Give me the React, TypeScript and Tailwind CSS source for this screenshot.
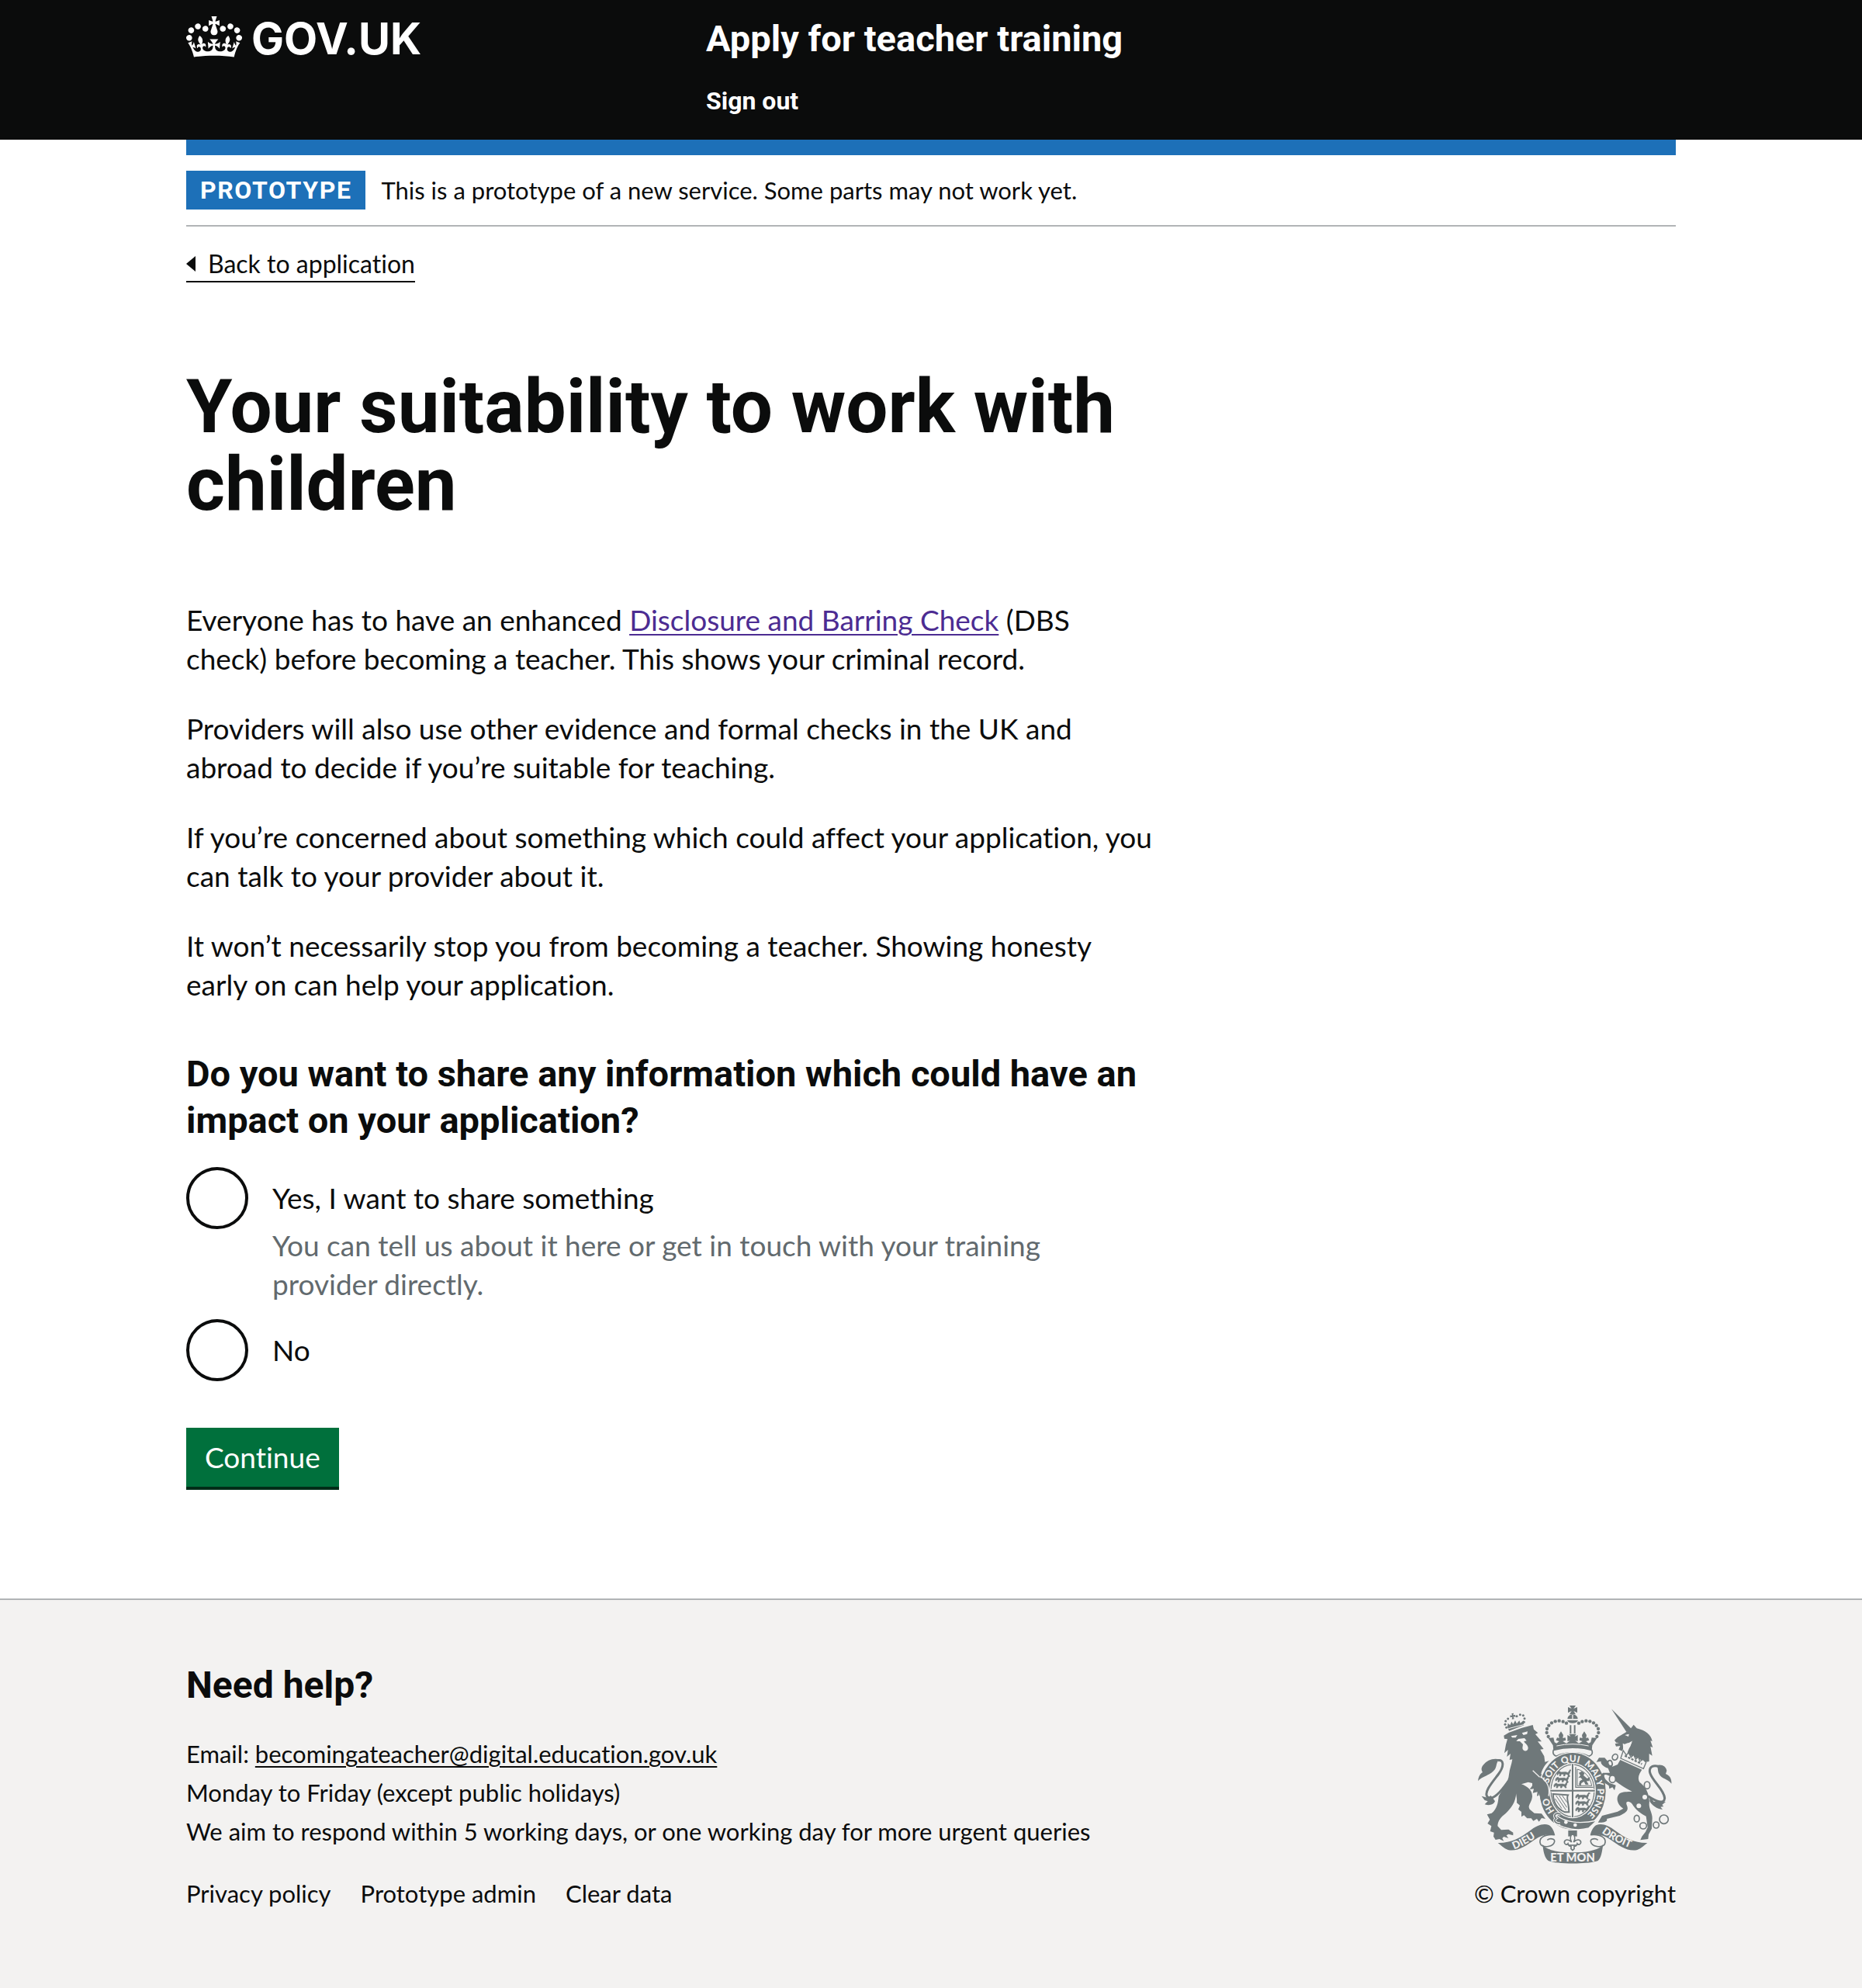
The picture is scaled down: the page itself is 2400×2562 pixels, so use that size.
import type { ReactNode } from "react";

const BODY = "font-['Lato','Liberation_Sans',sans-serif] [font-variant-ligatures:none]";
const HEAD = "font-['Roboto','Liberation_Sans',sans-serif] font-bold";

function CrownIcon() {
  return (
    <svg viewBox="0 0 132 97" className="mt-px h-[53px] w-[72px] shrink-0" fill="currentColor" aria-hidden="true">
      <path
        fillRule="evenodd"
        d="M25 30.2c3.5 1.5 7.7-.2 9.1-3.7 1.5-3.6-.2-7.8-3.9-9.2-3.6-1.4-7.6.3-9.1 3.9-1.4 3.5.3 7.5 3.9 9zM9 39.5c3.6 1.5 7.8-.2 9.2-3.7 1.5-3.6-.2-7.8-3.9-9.1-3.6-1.5-7.6.2-9.1 3.8-1.4 3.5.3 7.5 3.8 9zM4.4 57.2c3.5 1.5 7.7-.2 9.1-3.8 1.5-3.6-.2-7.7-3.9-9.1-3.5-1.5-7.6.3-9.1 3.8-1.4 3.5.3 7.6 3.9 9.1zm38.3-21.4c3.5 1.5 7.7-.2 9.1-3.8 1.5-3.6-.2-7.7-3.9-9.1-3.6-1.5-7.6.3-9.1 3.8-1.3 3.6.4 7.7 3.9 9.1zm64.4-5.6c-3.6 1.5-7.8-.2-9.1-3.7-1.5-3.6.2-7.8 3.8-9.2 3.6-1.4 7.7.3 9.2 3.9 1.3 3.5-.4 7.5-3.9 9zm15.9 9.3c-3.6 1.5-7.7-.2-9.1-3.7-1.5-3.6.2-7.8 3.7-9.1 3.6-1.5 7.7.2 9.2 3.8 1.5 3.5-.3 7.5-3.8 9zm4.7 17.7c-3.6 1.5-7.8-.2-9.2-3.8-1.5-3.6.2-7.7 3.9-9.1 3.6-1.5 7.7.3 9.2 3.8 1.3 3.5-.4 7.6-3.9 9.1zM89.3 35.8c-3.6 1.5-7.8-.2-9.2-3.8-1.4-3.6.2-7.7 3.9-9.1 3.6-1.5 7.7.3 9.2 3.8 1.4 3.6-.3 7.7-3.9 9.1zM69.7 17.7l8.9 4.7V9.3l-8.9 2.8c-.2-.3-.5-.6-.9-.9L72.4 0H59.6l3.5 11.2c-.3.3-.6.5-.9.9l-8.8-2.8v13.1l8.8-4.7c.3.3.6.7.9.9l-5 15.4v.1c-.2.8-.4 1.6-.4 2.4 0 4.1 3.1 7.5 7 8.1h.2c.3 0 .7.1 1 .1.4 0 .7 0 1-.1h.2c4-.6 7.1-4.1 7.1-8.1 0-.8-.1-1.7-.4-2.4V34l-5.1-15.4c.4-.2.7-.6 1-.9zM66 92.8c16.9 0 32.8 1.1 47.1 3.2 4-16.9 8.9-26.7 14-33.5l-9.6-3.4c1 4.9 1.1 7.2 0 10.2-1.5-1.4-3-4.3-4.2-8.7L108.6 76c2.8-2 5-3.2 7.5-3.3-4.4 9.4-10 11.9-13.6 11.2-4.3-.8-6.3-4.6-5.6-7.9 1-4.7 5.7-5.9 8-.5 4.3-8.7-3-11.4-7.6-8.8 7.1-7.2 7.9-13.5 2.1-21.1-8 6.1-8.1 12.3-4.5 20.8-4.7-5.4-12.1-2.5-9.5 6.2 3.4-5.2 7.9-2 7.2 3.1-.6 4.3-6.4 7.8-13.5 7.2-10.3-.9-10.9-8-11.2-13.8 2.5-.5 7.1 1.8 11 7.3L80.2 60c-4.1 4.4-8 5.3-12.3 5.4 1.4-4.4 8-11.6 8-11.6H55.5s6.4 7.2 7.9 11.6c-4.2-.1-8-1-12.3-5.4l1.4 16.4c3.9-5.5 8.5-7.7 10.9-7.3-.3 5.8-.9 12.8-11.1 13.8-7.2.6-12.9-2.9-13.5-7.2-.7-5 3.8-8.3 7.1-3.1 2.7-8.7-4.6-11.6-9.4-6.2 3.7-8.5 3.6-14.7-4.6-20.8-5.8 7.6-5 13.9 2.2 21.1-4.7-2.6-11.9.1-7.7 8.8 2.3-5.5 7.1-4.2 8.1.5.7 3.3-1.3 7.1-5.7 7.9-3.5.7-9-1.8-13.5-11.2 2.5.1 4.7 1.3 7.5 3.3l-4.7-15.4c-1.2 4.4-2.7 7.2-4.3 8.7-1.1-3-.9-5.3 0-10.2l-9.5 3.4c5 6.9 9.9 16.7 14 33.5 14.8-2.1 30.8-3.2 47.7-3.2z"
      />
    </svg>
  );
}

const INK = "#6f787a";
const PAPER = "#f3f2f1";

const CROWN_DOTS = [
  [344, 174], [338, 159], [339, 144], [346, 131], [357, 121], [371, 115], [386, 113], [401, 116], [414, 122],
];
const LION_CROWN_DOTS = [
  [182, 139], [177, 127], [179, 114], [188, 105], [222, 95], [235, 89], [247, 92], [252, 104], [250, 118],
];
const PASSANT =
  "M0 10 L4 4 L10 2 L14 6 L34 5 L42 8 L46 2 L50 -4 L56 -2 L50 2 L49 9 L46 13 L48 20 L43 20 L40 14 L32 13 L30 20 L25 20 L26 13 L16 13 L14 20 L9 20 L10 13 L6 10 L3 16 L0 16 Z";

function Passant({ x, y }: { x: number; y: number }) {
  return <path d={PASSANT} transform={`translate(${x} ${y})`} stroke={INK} strokeWidth="2" />;
}

function RoyalArms() {
  return (
    <svg viewBox="72 54 750 612" className="h-[204px] w-[250px]" fill={INK} role="img" aria-label="Royal coat of arms">
      <defs>
        <path id="garter" d="M438 496 A96 112 0 0 1 438 272 A96 112 0 0 1 438 496" />
        <path id="scroll-left" d="M212 610 Q262 592 322 546" />
        <path id="scroll-right" d="M550 545 Q602 584 676 610" />
        <clipPath id="shield">
          <ellipse cx="438" cy="383" rx="86" ry="103" />
        </clipPath>
      </defs>

      {/* lion tail */}
      <path d="M190 345 C160 388 128 424 109 408 C92 390 128 350 152 318 C174 288 172 262 150 266" fill="none" stroke={INK} strokeWidth="9" />
      <path d="M156 262 C130 256 108 264 92 284 C84 294 84 304 90 312 C80 318 74 328 72 346 C88 326 122 324 138 300 C146 286 142 272 156 262 Z" />
      <path d="M122 402 L108 410 L86 404 L98 420 L110 424 L98 436 C116 442 132 438 138 424 Z" />

      {/* lion */}
      <path d="M172 170 L192 158 L240 141 L284 129 L288 146 L304 160 L294 165 L318 193 L303 193 L326 222 L313 224 L328 250 L331 272 L347 268 C334 280 322 296 316 318 C332 336 346 356 345 382 L343 404 L330 398 L330 412 L312 410 L310 400 L300 404 L302 388 L284 392 L288 376 L272 378 L282 364 L282 354 L266 350 L240 358 C262 366 282 380 282 405 C280 430 262 440 272 455 L290 470 L318 472 L333 492 L318 489 L308 503 L300 492 L286 500 L278 490 L262 490 L250 478 L240 484 L240 465 L228 455 L234 440 L222 430 C224 410 218 400 220 390 C218 430 200 450 180 470 C160 485 148 500 148 520 L162 535 L190 533 L208 545 L208 556 L190 551 L182 556 L190 567 L172 561 L166 567 L172 578 L155 570 L140 573 L132 560 L134 545 L119 540 L124 520 L109 510 L118 495 L107 475 L125 470 C145 455 150 430 152 405 C166 375 190 350 192 320 C194 300 202 282 205 262 L194 264 L198 240 L184 252 L188 225 L174 238 L180 205 L186 184 L174 182 Z" />
      <path d="M284 305 Q318 338 334 354" fill="none" stroke={PAPER} strokeWidth="4" />
      <path d="M200 172 L224 168 L218 178 L204 178 Z M242 160 L264 154 L262 164 L248 168 Z M220 192 L228 183 L252 180 L260 190 L250 192 C252 200 266 206 266 218 C266 232 246 234 244 218 L246 204 L234 192 Z" fill={PAPER} />

      {/* lion crown */}
      <path d="M186 136 L188 122 L196 130 L202 116 L208 126 L216 112 L222 124 L232 112 L236 122 L248 112 L250 130 L192 152 Z" />
      <path d="M190 143 L252 127" stroke={PAPER} strokeWidth="3" />
      <path d="M202 85 L210 83 L208 91 L216 90 L217 98 L209 97 L212 106 L203 107 L205 98 L197 100 L196 92 L204 92 Z" />
      {LION_CROWN_DOTS.map(([x, y]) => <circle key={`${x}-${y}`} cx={x} cy={y} r="4.5" />)}

      {/* imperial crown */}
      <path d="M426 54 H450 L442 66 L456 60 V82 L442 75 L450 88 H426 L434 75 L420 82 V60 L434 66 Z" />
      <path d="M418 106 A20 18 0 0 1 458 106 Z M417 111 H459 A22 16 0 0 1 417 111 Z" />
      <path d="M438 90 V106" stroke={PAPER} strokeWidth="4" />
      <path d="M430 130 V162 M446 130 V162" stroke={INK} strokeWidth="6" />
      {CROWN_DOTS.map(([x, y]) => (
        <g key={`${x}-${y}`}>
          <circle cx={x} cy={y} r="6.5" />
          <circle cx={876 - x} cy={y} r="6.5" />
        </g>
      ))}
      <path d="M344 180 L364 178 L368 196 L376 200 L386 192 L374 188 L378 178 L386 180 L384 168 L393 154 L402 168 L400 180 L410 178 L412 188 L400 192 L414 200 L428 190 L418 192 L418 168 L430 174 L424 164 H452 L446 174 L458 168 L458 192 L448 190 L462 200 L476 192 L464 188 L466 178 L476 180 L474 168 L483 154 L492 168 L490 180 L498 178 L502 188 L490 192 L500 200 L508 196 L512 178 L532 180 L514 208 L512 228 C470 218 406 218 364 228 L362 208 Z" />
      <path d="M376 210 Q438 196 500 210" fill="none" stroke={PAPER} strokeWidth="3" />
      <path d="M364 226 C410 214 466 214 512 226 C518 240 510 248 500 250 C470 232 406 232 376 250 C364 246 360 238 364 226 Z" fill={PAPER} stroke={INK} strokeWidth="5" />

      {/* garter */}
      <ellipse cx="438" cy="385" rx="132" ry="152" fill={PAPER} />
      <ellipse cx="438" cy="385" rx="128" ry="148" />
      <ellipse cx="438" cy="383" rx="90" ry="107" fill={PAPER} />
      <g fill={PAPER} className="font-['Lato',sans-serif] text-[36px] font-black">
        <text><textPath href="#garter" startOffset="80">HO</textPath></text>
        <text><textPath href="#garter" startOffset="192">SOIT</textPath></text>
        <text><textPath href="#garter" startOffset="285">QUI</textPath></text>
        <text><textPath href="#garter" startOffset="372">MAL</textPath></text>
        <text><textPath href="#garter" startOffset="450">Y PENSE</textPath></text>
      </g>

      {/* shield */}
      <g clipPath="url(#shield)">
        <ellipse cx="438" cy="383" rx="84" ry="101" fill="none" stroke={INK} strokeWidth="4" />
        <Passant x={378} y={306} />
        <Passant x={372} y={329} />
        <Passant x={366} y={352} />
        <path d="M450 292 V370 H518" fill="none" stroke={INK} strokeWidth="4" />
        <path d="M456 300 C486 308 506 330 512 364 H456 Z" fill="none" stroke={INK} strokeWidth="3" />
        <path d="M462 314 L474 308 L484 316 L480 324 L494 336 L506 330 L502 346 L492 346 L500 360 L488 360 L482 348 L472 354 L470 364 L462 360 L466 346 L476 340 L468 332 L460 334 L468 324 Z" />
        <path d="M362 396 L420 400 C412 412 424 430 424 466 L408 466 C372 450 364 424 362 396 Z" fill="none" stroke={INK} strokeWidth="6" />
        <path d="M374 402 L412 458 M386 402 L416 448 M398 402 L416 428 M370 414 L396 452" stroke={INK} strokeWidth="3" />
        <Passant x={450} y={395} />
        <Passant x={450} y={420} />
        <Passant x={450} y={445} />
        <path d="M438 274 V490 M346 383 H530" stroke={PAPER} strokeWidth="13" />
        <path d="M438 274 V490 M346 383 H530" stroke={INK} strokeWidth="6" />
      </g>

      {/* buckle and strap */}
      <path d="M376 478 C410 508 470 512 532 498 L500 528 C460 540 410 532 368 508 Z" stroke={PAPER} strokeWidth="4" />
      <circle cx="412" cy="505" r="7" fill={PAPER} />
      <circle cx="448" cy="516" r="7" fill={PAPER} />
      <path d="M392 474 C370 466 362 480 374 490 C362 498 372 512 390 510" fill="none" stroke={PAPER} strokeWidth="11" />
      <path d="M392 474 C370 466 362 480 374 490 C362 498 372 512 390 510" fill="none" stroke={INK} strokeWidth="5" />

      {/* lion forepaw over the garter */}
      <path d="M310 330 C334 345 350 372 343 404 L334 396 L330 412 L322 400 L314 410 L302 384 Z" />
      <path d="M314 328 C338 346 352 372 345 404" fill="none" stroke={PAPER} strokeWidth="4" />

      {/* unicorn tail */}
      <path d="M730 404 C760 424 792 438 794 412 C792 376 738 340 736 308 C736 288 752 284 772 290" fill="none" stroke={INK} strokeWidth="9" />
      <path d="M762 286 C780 278 800 288 802 306 L798 318 C812 324 822 336 820 356 C806 336 784 340 772 318 C766 306 770 296 762 286 Z" />
      <path d="M736 404 L752 426 C766 422 784 428 798 426 L784 438 L790 444 L778 446 L786 456 C764 454 744 440 736 424 Z" />

      {/* unicorn */}
      <path d="M588 67 L668 146 L646 156 Z" />
      <path d="M600 188 L612 176 L640 160 L660 146 L674 128 L686 142 C720 150 742 168 746 192 L739 190 L748 216 L739 212 L746 248 L734 240 L734 270 L722 272 L650 242 C650 225 664 212 666 192 C656 200 646 198 640 204 C634 212 634 222 630 230 L616 224 L622 210 L606 212 L602 202 L618 198 L606 197 Z" />
      <path d="M640 168 L656 164 L654 174 Z M632 200 C650 210 668 198 672 184 L660 214 L640 232 L634 226 Z" fill={PAPER} />
      <path d="M634 228 L646 246 L654 236 L664 254 L674 244 L682 262 L692 252 L698 270 L710 262 L722 274 L712 298 L624 258 Z" fill={PAPER} stroke={INK} strokeWidth="4" />
      <path d="M640 248 L706 280" stroke={INK} strokeWidth="7" strokeDasharray="9 5" />
      <path d="M622 264 L706 302 C694 320 688 335 697 350 C722 368 738 400 734 436 C734 455 746 470 746 490 L744 530 L732 552 L730 570 L700 574 L706 560 L720 542 L728 525 L722 482 C700 470 682 458 668 434 C655 420 640 424 648 440 C655 458 648 466 620 480 L570 492 C575 502 560 508 536 506 L552 480 L612 464 L634 452 C612 440 602 410 620 394 C632 386 648 388 668 386 C640 372 618 356 605 347 L590 332 C575 322 562 318 560 324 C560 336 570 345 582 354 L605 362 L600 382 L592 370 L580 376 L578 364 L560 352 C545 340 542 322 556 314 L582 314 L575 296 C560 292 545 280 548 270 L530 272 L540 256 L562 256 L592 290 L612 282 Z" />
      <circle cx="717" cy="408" r="9" fill={PAPER} />
      <circle cx="694" cy="442" r="9" fill={PAPER} />
      <g fill={PAPER} stroke={INK} strokeWidth="5">
        <ellipse cx="602" cy="253" rx="10" ry="12" transform="rotate(30 602 253)" />
        <ellipse cx="583" cy="277" rx="8" ry="11" transform="rotate(-20 583 277)" />
        <ellipse cx="592" cy="338" rx="12" ry="14" />
        <ellipse cx="726" cy="362" rx="11" ry="14" />
        <ellipse cx="686" cy="491" rx="10" ry="13" />
        <ellipse cx="711" cy="519" rx="13" ry="12" />
        <ellipse cx="761" cy="516" rx="11" ry="12" />
        <circle cx="791" cy="494" r="17" />
      </g>

      {/* motto scroll */}
      <path d="M368 554 C330 550 304 566 314 590 C326 606 364 600 368 580 C370 568 350 566 340 574" fill={PAPER} stroke={INK} strokeWidth="5" />
      <path d="M508 554 C546 550 572 566 562 590 C550 606 512 600 508 580 C506 568 526 566 536 574" fill={PAPER} stroke={INK} strokeWidth="5" />
      <path d="M149 585 C200 586 234 566 270 540 C300 516 326 508 346 516 C360 524 366 540 370 556 C340 548 316 556 292 572 C258 596 224 620 188 612 C172 606 162 594 149 585 Z" />
      <path d="M727 585 C676 586 642 566 606 540 C576 516 550 508 530 516 C516 524 510 540 506 556 C536 548 560 556 584 572 C618 596 652 620 688 612 C704 606 714 594 727 585 Z" />
      <path d="M322 590 C334 612 380 622 438 622 C496 622 542 612 556 590 C552 620 548 644 536 654 C500 668 376 668 344 654 C330 644 324 616 322 590 Z" />
      <g fill={PAPER} className="font-['Lato',sans-serif] text-[40px] font-black">
        <text><textPath href="#scroll-left" startOffset="0">DIEU</textPath></text>
        <text><textPath href="#scroll-right" startOffset="0">DROIT</textPath></text>
        <text x="438" y="657" textAnchor="middle" className="text-[44px]">ET MON</text>
      </g>

      {/* pendant */}
      <path d="M421 537 H455 V560 H421 Z" />
      <path d="M438 548 C424 562 430 574 434 582 C424 570 408 570 406 582 C406 592 416 594 420 588 C422 596 428 598 432 598 L432 608 L438 614 L444 608 L444 598 C448 598 454 596 456 588 C460 594 470 592 470 582 C468 570 452 570 442 582 C446 574 452 562 438 548 Z" fill={PAPER} stroke={INK} strokeWidth="5" />
      <path d="M426 594 H450" stroke={INK} strokeWidth="5" />
    </svg>
  );
}

function Container({ children, className = "" }: { children: ReactNode; className?: string }) {
  return <div className={`mx-auto w-4/5 max-w-[1920px] ${className}`}>{children}</div>;
}

function Radio({ id, label, hint }: { id: string; label: string; hint?: string }) {
  return (
    <div className="grid grid-cols-[80px_1fr] gap-x-[31px]">
      <input
        type="radio"
        name="share"
        id={id}
        aria-describedby={hint ? `${id}-hint` : undefined}
        className="size-20 appearance-none rounded-full border-4 border-[#0b0c0c] bg-white checked:bg-[#0b0c0c] checked:shadow-[inset_0_0_0_16px_white]"
      />
      <label htmlFor={id} className="py-[15px]">{label}</label>
      {hint && <p id={`${id}-hint`} className="col-start-2 -mt-1 pr-[60px] text-[#626a6e]">{hint}</p>}
    </div>
  );
}

export default function App() {
  return (
    <div className={`min-h-screen bg-[#f3f2f1] text-[37px]/[50px] text-[#0b0c0c] ${BODY}`}>
      <div className="bg-white pb-[140px]">
        <header className="bg-[#0b0c0c] text-white">
          <Container className="flex gap-[30px] pt-5 pb-[30px]">
            <a href="#" className="flex w-1/3 items-start gap-3" aria-label="GOV.UK">
              <CrownIcon />
              <span className="font-['Inter','Liberation_Sans',sans-serif] text-[56px]/[60px] font-bold">GOV.UK</span>
            </a>
            <div className={`${HEAD} flex-1`}>
              <a href="#" className="block text-[47px]/[60px]">Apply for teacher training</a>
              <a href="#" className="mt-[30px] block text-[32px]/[40px]">Sign out</a>
            </div>
          </Container>
        </header>

        <Container>
          <div className="h-5 bg-[#1d70b8]" />
          <div className="flex items-center gap-5 border-b-2 border-[#b1b4b6] py-5 text-[31px]/[50px]">
            <strong className={`bg-[#1d70b8] px-[18px] text-[32px]/[50px] tracking-wider text-white ${HEAD}`}>PROTOTYPE</strong>
            <span>This is a prototype of a new service. Some parts may not work yet.</span>
          </div>
          <a href="#" className="mt-7 inline-flex items-center gap-4 border-b-2 border-[#0b0c0c] pb-0.5 text-[32px]/[40px]">
            <svg viewBox="0 0 12 20" className="h-5 w-3" fill="currentColor" aria-hidden="true"><path d="M0 10 12 0v20z" /></svg>
            Back to application
          </a>

          <main className="w-[66%]">
            <h1 className={`mt-[110px] text-[96px]/[100px] ${HEAD}`}>Your suitability to work with children</h1>
            <div className="mt-[100px] flex flex-col gap-10">
              <p>
                Everyone has to have an enhanced{" "}
                <a href="#" className="text-[#4c2c92] underline decoration-2 underline-offset-4">Disclosure and Barring Check</a>{" "}
                (DBS
                <br />
                check) before becoming a teacher. This shows your criminal record.
              </p>
              <p>
                Providers will also use other evidence and formal checks in the UK and
                <br />
                abroad to decide if you’re suitable for teaching.
              </p>
              <p>If you’re concerned about something which could affect your application, you can talk to your provider about it.</p>
              <p>
                It won’t necessarily stop you from becoming a teacher. Showing honesty
                <br />
                early on can help your application.
              </p>
            </div>
            <form className="mt-[60px]" onSubmit={(e) => e.preventDefault()}>
              <fieldset>
                <legend className={`mb-[30px] text-[47px]/[60px] ${HEAD}`}>
                  Do you want to share any information which could have an impact on your application?
                </legend>
                <div className="flex flex-col gap-5">
                  <Radio id="share-yes" label="Yes, I want to share something" hint="You can tell us about it here or get in touch with your training provider directly." />
                  <Radio id="share-no" label="No" />
                </div>
              </fieldset>
              <button type="submit" className="mt-[60px] border-b-4 border-[#002d18] bg-[#00703c] px-6 py-[13px] text-white">Continue</button>
            </form>
          </main>
        </Container>
      </div>

      <footer className="border-t-2 border-[#b1b4b6] pt-20 pb-24 text-[31px]/[50px]">
        <Container className="flex items-end justify-between">
          <div>
            <h2 className={`mb-[33px] text-[48px]/[60px] ${HEAD}`}>Need help?</h2>
            <p>
              Email:{" "}
              <a href="mailto:becomingateacher@digital.education.gov.uk" className="underline decoration-2 underline-offset-4">
                becomingateacher@digital.education.gov.uk
              </a>
            </p>
            <p>Monday to Friday (except public holidays)</p>
            <p>We aim to respond within 5 working days, or one working day for more urgent queries</p>
            <ul className="mt-[30px] flex gap-[38px]">
              <li><a href="#">Privacy policy</a></li>
              <li><a href="#">Prototype admin</a></li>
              <li><a href="#">Clear data</a></li>
            </ul>
          </div>
          <a href="#" className="flex flex-col items-center gap-[13px]">
            <RoyalArms />
            © Crown copyright
          </a>
        </Container>
      </footer>
    </div>
  );
}
